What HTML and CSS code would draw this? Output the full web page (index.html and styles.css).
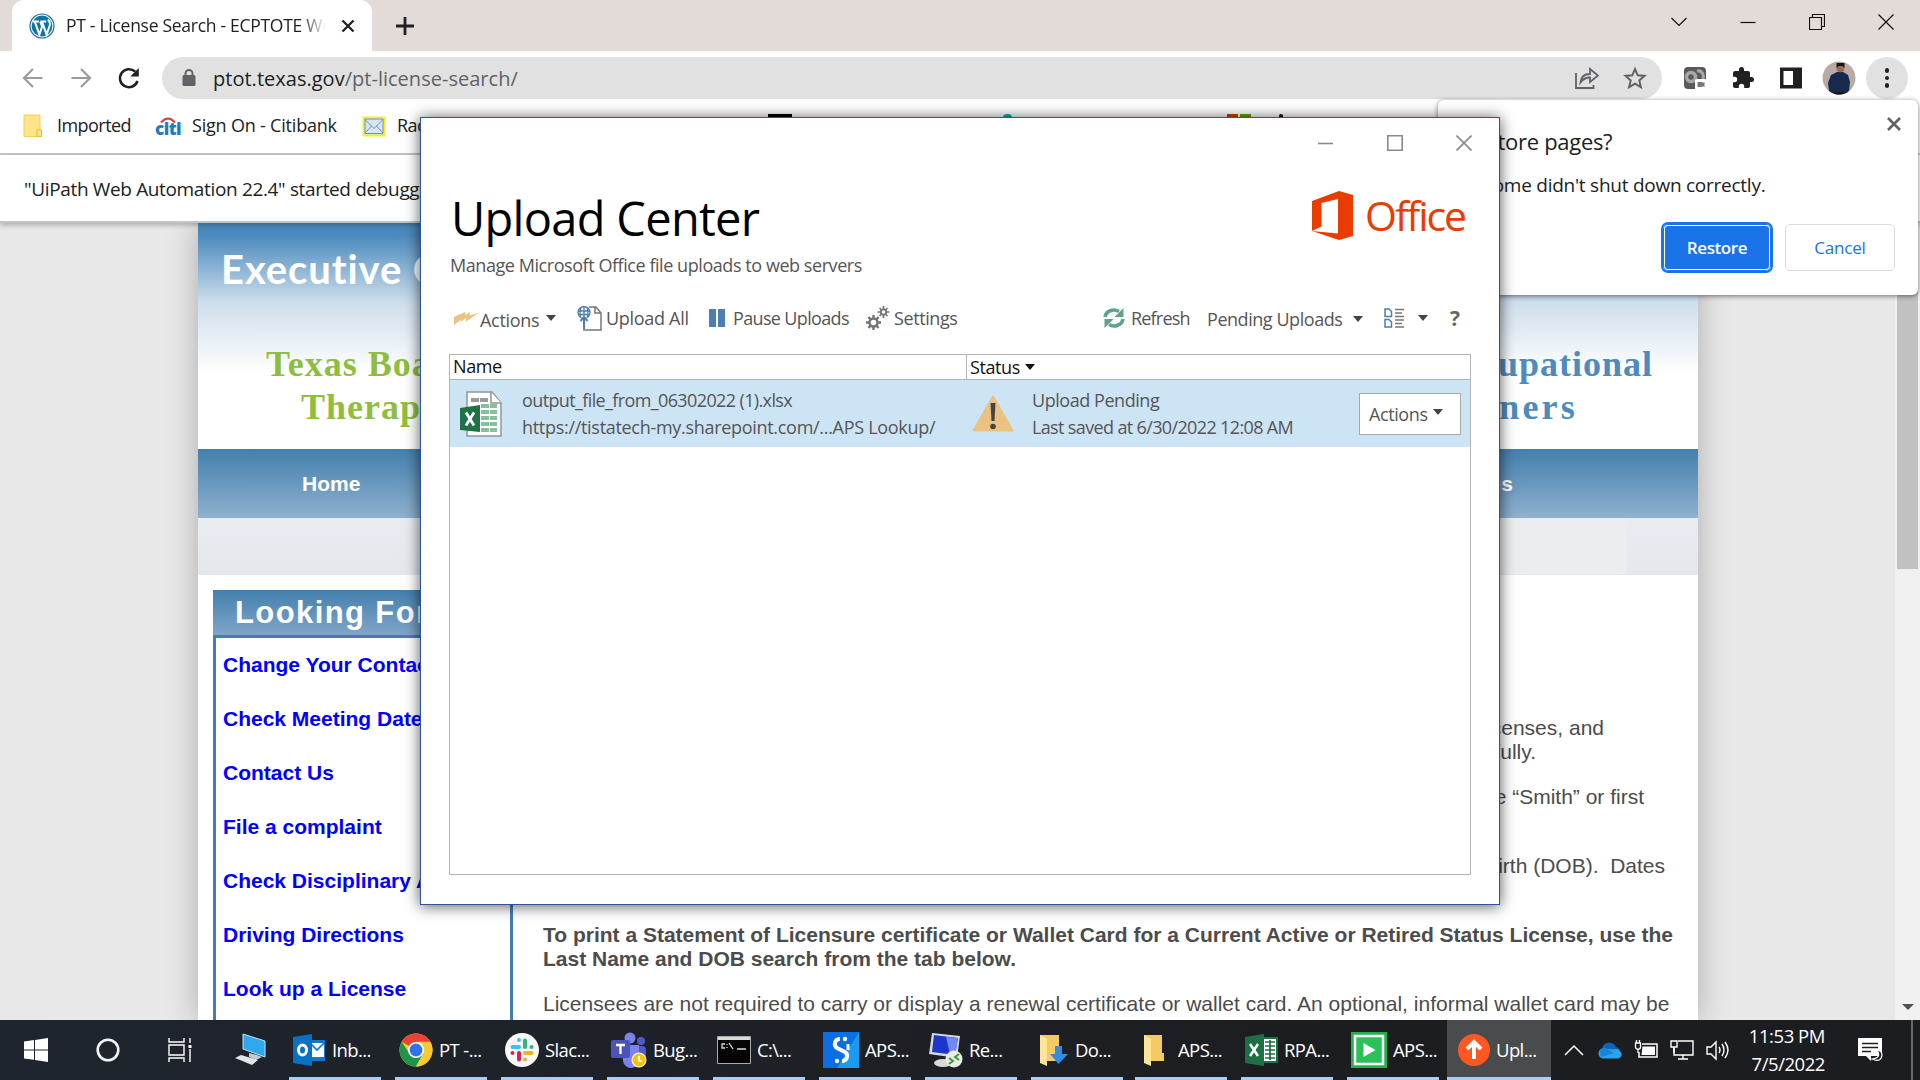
FILE: index.html
```html
<!DOCTYPE html>
<html lang="en">
<head>
<meta charset="utf-8">
<title>PT - License Search</title>
<link rel="stylesheet" href="styles.css">
</head>
<body>
<div class="desktop">
  <header class="tabstrip">
    <div class="tab">
      <svg class="wp" width="26" height="26" viewBox="0 0 26 26"><circle cx="13" cy="13" r="12" fill="#fff" stroke="#0b76a5" stroke-width="1.2"/><circle cx="13" cy="13" r="10.4" fill="#0b76a5"/><path d="M4 8.600h6M5.800 8.600l4.600 13 2.700-8-1.800-5M11.300 8.600h6M13 8.600l4.600 13 3.300-9.600c.8-3-.8-4-2-5.500" fill="none" stroke="#fff" stroke-width="2"/></svg>
      <span class="tab-title">PT - License Search - ECPTOTE W<span>eb</span></span>
      <svg width="14" height="14" viewBox="0 0 14 14"><path d="M1.500 1.500l11 11M12.500 1.500l-11 11" stroke="#202124" stroke-width="2.300"/></svg>
    </div>
    <svg class="plus" width="18" height="18" viewBox="0 0 18 18"><path d="M9 0v18M0 9h18" stroke="#202124" stroke-width="2.800"/></svg>
    <div class="win-controls">
      <svg width="16" height="16" viewBox="0 0 16 16"><path d="M.5 4l7.500 7.500L15.500 4"/></svg>
      <svg width="16" height="16" viewBox="0 0 16 16"><path d="M.5 8.500h15"/></svg>
      <svg width="16" height="16" viewBox="0 0 16 16"><path d="M.5 3.500h12v12h-12zM3.500 3.500v-3h12v12h-3"/></svg>
      <svg width="16" height="16" viewBox="0 0 16 16"><path d="M.5.5l15 15M15.500.5l-15 15"/></svg>
    </div>
  </header>

  <div class="toolbar">
    <svg class="nav" width="24" height="24" viewBox="0 0 24 24"><path d="M21.500 12H4M12 3l-9 9 9 9" fill="none" stroke="#9b9b9b" stroke-width="2.200"/></svg>
    <svg class="nav" width="24" height="24" viewBox="0 0 24 24"><path d="M2.500 12H20M12 3l9 9-9 9" fill="none" stroke="#9b9b9b" stroke-width="2.200"/></svg>
    <svg class="nav" width="24" height="24" viewBox="0 0 24 24"><path d="M20.500 15a9 9 0 1 1-2.300-9.300" fill="none" stroke="#202124" stroke-width="2.500"/><path d="M21.800 2v8.500h-8.500z" fill="#202124"/></svg>
    <div class="omnibox">
      <svg width="14" height="18" viewBox="0 0 14 18"><rect x=".5" y="6" width="13" height="11" rx="1.500" fill="#5f6368"/><path d="M3.500 7V4.500a3.500 3.500 0 0 1 7 0V7" fill="none" stroke="#5f6368" stroke-width="2"/></svg>
      <span class="url">ptot.texas.gov<span>/pt-license-search/</span></span>
      <svg class="share" width="24" height="24" viewBox="0 0 24 24"><path d="M1 7v15h17.500v-3M5.500 16.500c.5-5.500 4-8.500 9.500-8.500V3l8 6.500-8 6.500v-4.500c-4 0-7 1.500-9.500 5z" fill="none" stroke="#5f6368" stroke-width="1.800"/></svg>
      <svg width="24" height="24" viewBox="0 0 24 24"><path d="M12 3l2.700 6.300 6.800.6-5.200 4.500 1.600 6.700-5.900-3.500-5.900 3.500 1.600-6.700-5.200-4.500 6.800-.6z" fill="none" stroke="#5f6368" stroke-width="2"/></svg>
    </div>
    <svg class="ext" width="24" height="24" viewBox="0 0 24 24"><rect x="1" y="1" width="22" height="22" rx="4" fill="#5a5a5a"/><circle cx="8" cy="11" r="4.500" fill="none" stroke="#a8a8a8" stroke-width="3.500"/><path d="M14 5c6-1 7 5 6 8" fill="none" stroke="#a8a8a8" stroke-width="3"/><rect x="12" y="13" width="12" height="11" rx="2" fill="#fff"/><path d="M14.500 16h5v1l2-1v5l-2-1v1h-5z" fill="#777"/></svg>
    <svg class="ext" width="24" height="24" viewBox="0 0 24 24"><path d="M20.500 11H19V7a2 2 0 0 0-2-2h-4V3.500a2.500 2.500 0 0 0-5 0V5H4a2 2 0 0 0-2 2v3.800h1.500a2.700 2.700 0 0 1 0 5.400H2V20a2 2 0 0 0 2 2h3.800v-1.500a2.700 2.700 0 0 1 5.400 0V22H17a2 2 0 0 0 2-2v-4h1.500a2.500 2.500 0 0 0 0-5z" fill="#202124"/></svg>
    <svg class="ext" width="24" height="24" viewBox="0 0 24 24"><path d="M1 1.500h22v21H1zM4.500 5v14h9.500V5z" fill="#202124" fill-rule="evenodd"/></svg>
    <svg class="avatar" width="34" height="34" viewBox="0 0 34 34"><defs><clipPath id="av"><circle cx="17" cy="17" r="16.500"/></clipPath></defs><g clip-path="url(#av)"><path fill="#b9aaa5" d="M0 0h34v34H0z"/><path d="M15 11h6l5 3 2 7-1 9-4 4H11l-4-4-1-8 3-8z" fill="#17294d"/><circle cx="18.500" cy="7.500" r="3.800" fill="#9c6b58"/><path d="M14.500 7V2h8v5l-2-2h-4z" fill="#17130f"/><path d="M12 31h14v3H12z" fill="#171717"/></g></svg>
    <div class="menu-btn"><i></i><i></i><i></i></div>
  </div>

  <div class="bookmarks">
    <svg width="20" height="24" viewBox="0 0 20 24"><path d="M1 1h16v15h1.500v6.500H1z" fill="#ffe38a" stroke="#f3cd52"/><path d="M14 22v-6h4.500v6.500z" fill="#ffe38a" stroke="#e9bd3c"/></svg>
    <span class="bm bm-1">Imported</span>
    <span class="citi"><svg width="16" height="6" viewBox="0 0 16 6"><path d="M1 5.500q7-8 14 0" fill="none" stroke="#e03a3e" stroke-width="2"/></svg><b>citi</b></span>
    <span class="bm bm-2">Sign On - Citibank</span>
    <svg class="mail" width="24" height="24" viewBox="0 0 24 24"><path d="M1.500 3.500h21v18h-21z" fill="#d5e5f2" stroke="#f7f01b" stroke-width="2"/><path d="M3 5h18v14.500H3zM3 5.500l9 9 9-9M3 19l6.500-7M21 19l-6.500-7" fill="none" stroke="#6f94b8"/></svg>
    <span class="bm bm-3">Rackspace</span>
    <i class="fav fav-black"></i><i class="fav fav-teal"></i><i class="fav fav-ms"></i><i class="fav fav-dot"></i>
  </div>

  <div class="infobar"><span>"UiPath Web Automation 22.4" started debugging</span></div>

  <main class="viewport">
    <div class="site">
      <div class="banner">
        <div class="council">Executive Council</div>
        <div class="boards"><span class="pt pt-1">Texas Board of</span><span class="ot ot-1">Occupational</span></div>
        <div class="boards"><span class="pt pt-2">Therapy</span><span class="ot ot-2">Examiners</span></div>
      </div>
      <nav class="menu"><span>Home</span><span>Meetings</span></nav>
      <div class="subnav"><i></i></div>
      <div class="columns">
        <aside class="side">
          <h2>Looking For</h2>
          <ul>
            <li>Change Your Contact</li><li>Check Meeting Dates</li><li>Contact Us</li><li>File a complaint</li><li>Check Disciplinary Actions</li><li>Driving Directions</li><li>Look up a License</li>
          </ul>
        </aside>
        <article class="content">
          <p class="end e1">licenses, and</p>
          <p class="end e2">carefully.</p>
          <p class="end e3">like “Smith” or first</p>
          <p class="end e4">Birth (DOB).&nbsp; Dates</p>
          <p class="strong"><b>To print a Statement of Licensure certificate or Wallet Card for a Current Active or Retired Status License, use the</b><br><b>Last Name and DOB search from the tab below.</b></p>
          <p class="last">Licensees are not required to carry or display a renewal certificate or wallet card. An optional, informal wallet card may be</p>
        </article>
      </div>
    </div>
    <div class="scrollbar"><i class="thumb"></i><i class="down"></i></div>
  </main>

  <footer class="taskbar">
    <div class="sys">
      <svg width="24" height="24" viewBox="0 0 24 24"><path d="M0 3.500l10-1.400v9.300H0zM11 2l13-2v11.400H11zM0 12.400h10v9.400L0 20.500zM11 12.400h13V24l-13-2z" fill="#fff"/></svg>
      <svg width="24" height="24" viewBox="0 0 24 24"><circle cx="12" cy="12" r="10.300" fill="none" stroke="#f2f2f2" stroke-width="2.600"/></svg>
      <svg width="24" height="24" viewBox="0 0 24 24"><path d="M1 0v4h15V0M1 24v-4h15v4M1 7h15v10H1zM22 0v5M22 11v13" fill="none" stroke="#fff" stroke-width="1.400"/><path d="M20.500 7h3v3h-3z" fill="#fff"/></svg>
    </div>
    <svg class="pc" width="34" height="34" viewBox="0 0 34 34"><path d="M9 1l22 7v16L9 16z" fill="#2fa8ee" stroke="#bfe3f7"/><path d="M15 20l8 2 5 2-6 3-7-3z" fill="#c3cbd1"/><path d="M1 25l6-3 17 5-6 5z" fill="#dfe4e8"/></svg>
    <div class="task"><svg width="33" height="34" viewBox="0 0 33 34"><path d="M15 7h17v21H15z" fill="#1079ce"/><path d="M18 10h13v14H18z" fill="#fff"/><path d="M18 11l6 6 7-7" fill="none" stroke="#1079ce" stroke-width="1.700"/><path d="M0 4l19-3v32L0 30z" fill="#0572c6"/><ellipse cx="9.500" cy="17" rx="4" ry="5" fill="none" stroke="#fff" stroke-width="3"/></svg><span>Inb...</span></div>
    <div class="task"><svg width="34" height="34" viewBox="0 0 34 34"><circle cx="17" cy="17" r="16.500" fill="#fcc934"/><path d="M17 17L2.700 8.800A16.500 16.500 0 0 1 31.300 8.800z" fill="#ea4335"/><path d="M2.700 8.800A16.500 16.500 0 0 0 17 33.500l7-12.500-14-1z" fill="#1e9648"/><path d="M17 8.800h14.300a16.500 16.500 0 0 1-14.300 24.700l7.200-12.400z" fill="#fcc934"/><circle cx="17" cy="17" r="8" fill="#fff"/><circle cx="17" cy="17" r="6.400" fill="#2f73e8"/></svg><span>PT -...</span></div>
    <div class="task"><svg width="34" height="34" viewBox="0 0 34 34"><circle cx="17" cy="17" r="17" fill="#f8f8f8"/><g fill="none" stroke-width="4" stroke-linecap="round"><path d="M14 7v0M7.500 14H14" stroke="#36c5f0"/><path d="M20 7.500V14M26.500 14v0" stroke="#2eb67d"/><path d="M20 20h6.500M20 26.500v0" stroke="#ecb22e"/><path d="M14 20v6.500M7.500 20v0" stroke="#e01e5a"/></g></svg><span>Slac...</span></div>
    <div class="task"><svg width="36" height="36" viewBox="0 0 36 36"><circle cx="30" cy="9" r="4" fill="#5059c9"/><rect x="22" y="14" width="13" height="15" rx="4" fill="#5059c9"/><circle cx="19" cy="6" r="5.500" fill="#7b83eb"/><path d="M11 13h17v14a8 8 0 0 1-16 2z" fill="#7b83eb"/><rect x="0" y="8" width="19" height="18" rx="2" fill="#4b53bc"/><path d="M5 13h9M9.500 13v9" stroke="#fff" stroke-width="2.300"/><circle cx="28" cy="28" r="7.500" fill="#fff"/><circle cx="28" cy="28" r="6.500" fill="#fcc000"/><path d="M28 24v5h3" fill="none" stroke="#fff" stroke-width="1.800"/></svg><span>Bug...</span></div>
    <div class="task"><svg width="34" height="34" viewBox="0 0 34 34"><path d="M.5 3.500h33v27H.5z" fill="#050505" stroke="#aaa"/><path d="M1 4h32v3H1z" fill="#dadada"/><path d="M8 11H5v4h3M10 11v1M10 14v1M12 10l4 6M20 16h9" fill="none" stroke="#ddd" stroke-width="1.300"/></svg><span>C:\...</span></div>
    <div class="task"><svg width="36" height="36" viewBox="0 0 36 36"><path fill="#0a6fe4" d="M0 0h36v36H0z"/><path fill="#199cf0" d="M36 0v36H14z"/><path d="M17 7h-1a5 5 0 0 0-2 9l8 4a5 5 0 0 1-2 9h-1" fill="none" stroke="#fff" stroke-width="4"/><circle cx="22" cy="7" r="2.200" fill="#fff"/><circle cx="14" cy="29" r="2.200" fill="#fff"/><path d="M25 12v6" stroke="#fff" stroke-width="3"/></svg><span>APS...</span></div>
    <div class="task"><svg width="34" height="36" viewBox="0 0 34 36"><path d="M3 1l28 3-3 22L0 22z" fill="#d5d8dc"/><path d="M5 3l24 3-3 17L3 20z" fill="#1c36cc"/><path d="M17 5l12 1-3 17-5-1z" fill="#6f8bf0"/><ellipse cx="14" cy="31" rx="9" ry="4" fill="#d8d8d8"/><circle cx="25" cy="27" r="8.500" fill="#ebebe8"/><path d="M20 26l4 3-4 3M30 22l-4 3 4 3" fill="none" stroke="#34a233" stroke-width="2"/></svg><span>Re...</span></div>
    <div class="task task-folder"><svg width="30" height="34" viewBox="0 0 30 34"><path d="M1 2h19v26H1z" fill="#f3cb62"/><path d="M1 2l7 4v27l-7-3z" fill="#ffe49a"/><path d="M16 13h7v8h6L19.500 31 11 21h5z" fill="#2c8fe4"/></svg><span>Do...</span></div>
    <div class="task task-aps"><svg width="22" height="34" viewBox="0 0 22 34"><path d="M1 2h18v18h2v8H1z" fill="#f3cb62"/><path d="M1 2l7 4v27l-7-3z" fill="#ffe49a"/></svg><span>APS...</span></div>
    <div class="task"><svg width="33" height="34" viewBox="0 0 33 34"><path d="M17 5h15v24H17z" fill="#fff" stroke="#1d7044" stroke-width="2"/><path d="M20 9h10M20 13h10M20 17h10M20 21h10M20 25h10M25 7v20" stroke="#1d7044" stroke-width="1.700"/><path d="M0 4l19-3v32L0 30z" fill="#1d7044"/><path d="M5 11l8 12M13 11L5 23" stroke="#fff" stroke-width="2.500"/></svg><span>RPA...</span></div>
    <div class="task"><svg width="36" height="36" viewBox="0 0 36 36"><path fill="#23b14e" d="M0 0h36v36H0z"/><path d="M4 4h28v28H4z" fill="#2bc05a" stroke="#fff" stroke-width="2.500"/><path d="M12.500 11l12 7-12 7z" fill="#fff"/></svg><span>APS...</span></div>
    <div class="task active"><svg width="32" height="32" viewBox="0 0 32 32"><circle cx="16" cy="16" r="16" fill="#ff5722"/><path d="M16 25V8M9 15l7-7 7 7" fill="none" stroke="#fff" stroke-width="4"/></svg><span>Upl...</span></div>
    <div class="tray">
      <svg width="20" height="24" viewBox="0 0 20 24"><path d="M1 17l9-9 9 9" fill="none" stroke="#fff" stroke-width="1.500"/></svg>
      <svg width="24" height="24" viewBox="0 0 24 24"><path d="M5 20a5 5 0 0 1-1-9.500A7.500 7.500 0 0 1 18 9a6 6 0 0 1 1 11z" fill="#0d64b8"/><path d="M5 20.500a5 5 0 0 1 1-10l9 1a6 6 0 0 1 8 3 4 4 0 0 1-3 6z" fill="#29a4ea"/><path d="M2 12a6 6 0 0 1 6-2l8 5L3 19z" fill="#1684d8"/></svg>
      <svg width="24" height="24" viewBox="0 0 24 24"><path d="M8 6h15v13H5v-5" fill="none" stroke="#fff" stroke-width="1.500"/><path d="M8.500 8.500h12.500v8.500H7.500z" fill="#fff"/><path d="M1.500 5h5v4c0 3-5 3-5 0zM2.500 2v3M5.500 2v3M4 11v4" fill="none" stroke="#fff" stroke-width="1.300"/></svg>
      <svg width="24" height="24" viewBox="0 0 24 24"><path d="M8 3h15v14H4v-7M13 17v4M8 21h10" fill="none" stroke="#fff" stroke-width="1.400"/><path d="M1 3h6v6H1zM4 9v6" fill="none" stroke="#fff" stroke-width="1.400"/></svg>
      <svg width="24" height="24" viewBox="0 0 24 24"><path d="M1 9h4l5-5v17l-5-5H1zM13 9q2 3 0 6M16 6q4 6 0 12M19 4q6 8 0 16" fill="none" stroke="#fff" stroke-width="1.400"/></svg>
    </div>
    <div class="clock"><span>11:53 PM</span><span>7/5/2022</span></div>
    <svg class="notice" width="26" height="26" viewBox="0 0 26 26"><path d="M1 1h24v18H14v5l-5-5H1z" fill="#fff"/><path d="M5 6.500h16M5 10.500h16M5 14.500h9" stroke="#1d1e21" stroke-width="1.500"/><path d="M20 13q5 8-5 9 9 4 10-4 0-4-5-5z" fill="#1d1e21" stroke="#fff" stroke-width="1.200"/></svg>
    <i class="peek"></i>
  </footer>

  <section class="restore">
    <svg class="restore-x" width="14" height="14" viewBox="0 0 14 14"><path d="M1 1l12 12M13 1L1 13" stroke="#5f6368" stroke-width="2.600"/></svg>
    <h3>Restore pages?</h3>
    <p>Chrome didn't shut down correctly.</p>
    <div class="restore-btns"><span class="primary">Restore</span><span class="secondary">Cancel</span></div>
  </section>

  <section class="window">
    <div class="window-controls">
      <svg width="16" height="16" viewBox="0 0 16 16"><path d="M0 8.500h15"/></svg>
      <svg width="16" height="16" viewBox="0 0 16 16"><path d="M.8.800h14.400v14.400H.8z"/></svg>
      <svg width="16" height="16" viewBox="0 0 16 16"><path d="M.5.5l15 15M15.500.5l-15 15"/></svg>
    </div>
    <div class="window-head">
      <div><h1>Upload Center</h1><p>Manage Microsoft Office file uploads to web servers</p></div>
      <div class="office"><svg width="41" height="49" viewBox="0 0 41 49"><path d="M0 10L27 0l14 4v41l-14 4L0 40l26 2.500V8L9.500 12v23.500L0 40z" fill="#eb3c00"/></svg><span>Office</span></div>
    </div>
    <div class="commands">
      <div class="cmd c-actions"><svg width="25" height="14" viewBox="0 0 25 14"><path d="M0 6L11 1l.5 3L16 1l-.5 3.500L25 1.500 11.500 11l1-4.500L6.500 11V9L0 14z" fill="#eac282"/></svg><span>Actions</span><i class="caret"></i></div>
      <div class="cmd c-upload"><svg width="25" height="25" viewBox="0 0 25 25"><path d="M12 1h7l5 6v17H6M18 1v6h6" fill="none" stroke="#777" stroke-width="1.500"/><g fill="none" stroke="#4a7eb5" stroke-width="1.300"><circle cx="7" cy="6.500" r="6"/><path d="M1 5h12M1 8.500h12M7 0v13M4 1.500q-2 5 0 10M10 1.500q2 5 0 10"/></g><path d="M7 10v12" stroke="#fff" stroke-width="5"/><path d="M7 23V11M3.500 15L7 11l3.500 4" fill="none" stroke="#4a7eb5" stroke-width="2"/></svg><span>Upload All</span></div>
      <div class="cmd c-pause"><svg width="16" height="18" viewBox="0 0 16 18"><path d="M0 0h7v18H0zM9 0h7v18H9z" fill="#4a7eb5"/></svg><span>Pause Uploads</span></div>
      <div class="cmd c-settings"><svg width="25" height="25" viewBox="0 0 25 25"><g fill="none" stroke="#747474"><circle cx="8.500" cy="16.500" r="4" stroke-width="2.500"/><path d="M8.500 9v4M8.500 20v4M1 16.500h4M12 16.500h4M3.500 11l2.500 3M13.500 11L11 14M3.500 22L6 19M13.500 22L11 19" stroke-width="2.400"/><circle cx="18.500" cy="6" r="2.700" stroke-width="1.800"/><path d="M18.500 0v3M18.500 9v3M12.500 6h3M21.500 6h3M14.500 2l2 2M22.500 2l-2 2M14.500 10l2-2M22.500 10l-2-2" stroke-width="1.700"/></g></svg><span>Settings</span></div>
      <div class="cmd c-refresh"><svg width="22" height="22" viewBox="0 0 22 22"><path d="M2 10a9 8 0 0 1 14-5.500M20 12A9 8 0 0 1 6 17.500" fill="none" stroke="#5fa387" stroke-width="3.600"/><path d="M20.500 1v9h-9zM1.500 21v-9h9z" fill="#5fa387"/></svg><span>Refresh</span></div>
      <div class="cmd c-pending"><span>Pending Uploads</span><i class="caret"></i></div>
      <div class="cmd c-view"><svg width="20" height="20" viewBox="0 0 20 20"><path d="M1 1h4l2.500 2.500V8.500H1zM1 11.500h4L7.500 14v5H1z" fill="none" stroke="#4a7eb5" stroke-width="1.500"/><path d="M11 1.500h9M11 5h7M11 8.500h9M11 12h9M11 15.500h7M11 19h9" stroke="#777" stroke-width="1.300"/></svg><i class="caret"></i></div>
      <b class="help">?</b>
    </div>
    <div class="list">
      <div class="list-head"><span class="col-name">Name</span><span class="col-status">Status<i class="caret"></i></span></div>
      <div class="list-row">
        <svg class="xls" width="42" height="46" viewBox="0 0 42 46"><path d="M7 1h25l9 11v33H7z" fill="#fff" stroke="#8d969c" stroke-width="1.500"/><path d="M31 1v11h10" fill="#fff" stroke="#8d969c" stroke-width="1.500"/><path d="M11 7h8v4h-8zM20 7h8v4h-8z" fill="#9a9a9a"/><path d="M21 13h8v4h-8zM30 13h7v4h-7zM21 19h8v4h-8zM30 19h7v4h-7zM21 25h8v4h-8zM30 25h7v4h-7zM21 31h8v4h-8zM30 31h7v4h-7zM21 37h8v4h-8zM30 37h7v4h-7z" fill="#87bf9f"/><path d="M0 17l20-3v27L0 39z" fill="#1f7246"/><path d="M6 21.500l8 13M14 21.500l-8 13" stroke="#fff" stroke-width="2.800"/></svg>
        <div class="file"><span class="f1">output_file_from_06302022 (1).xlsx</span><span class="f2">https://tistatech-my.sharepoint.com/...APS Lookup/</span></div>
        <svg class="warn" width="42" height="37" viewBox="0 0 42 37"><path d="M21 1.500L40.500 35.500h-39z" fill="#eac282" stroke="#eac282" stroke-width="2" stroke-linejoin="round"/><path d="M18.500 8h5l-1 18h-3z" fill="#444"/><circle cx="21" cy="31.500" r="2.800" fill="#444"/></svg>
        <div class="state"><span class="s1">Upload Pending</span><span class="s2">Last saved at 6/30/2022 12:08 AM</span></div>
        <div class="row-btn"><span>Actions</span><i class="caret"></i></div>
      </div>
    </div>
  </section>
</div>
</body>
</html>
```
FILE: styles.css
```css
* { box-sizing: border-box; }
body { margin: 0; overflow: hidden; font-family: "Open Sans", "Noto Sans", sans-serif; color: #202124; }
h1, h2, h3, p, ul { margin: 0; padding: 0; font-weight: normal; list-style: none; }
svg { display: block; flex: none; }
span { white-space: nowrap; }
.desktop { position: relative; width: 1920px; height: 1080px; display: flex; flex-direction: column; overflow: hidden; background: #fff; }

/* browser chrome */
.tabstrip { height: 51px; flex: none; display: flex; align-items: center; background: #e3dbd8; padding-left: 12px; }
.tab { width: 360px; height: 51px; display: flex; align-items: center; background: #fff; border-radius: 12px 12px 0 0; padding: 0 16px 0 17px; }
.tab-title { width: 262px; margin: 0 13px 2px 11px; overflow: hidden; font-size: 17.500px; letter-spacing: -.28px; -webkit-mask-image: linear-gradient(90deg, #000 90%, transparent 99%); mask-image: linear-gradient(90deg, #000 90%, transparent 99%); }
.plus { margin-left: 24px; }
.win-controls { margin-left: auto; margin-right: 26px; display: flex; gap: 53px; fill: none; stroke: #111; stroke-width: 1.200; padding-bottom: 8px; }
.toolbar { height: 54px; flex: none; display: flex; align-items: center; padding: 0 12px 0 21px; }
.nav { margin-right: 24px; }
.omnibox { width: 1500px; height: 42px; margin-left: -3px; border-radius: 21px; background: #e1e1e1; display: flex; align-items: center; padding: 0 15px 0 20px; }
.url { margin-left: 17px; font-size: 20px; letter-spacing: .02px; }
.url span { color: #5f6368; }
.share { margin-left: auto; margin-right: 24px; }
.ext { margin-left: 24px; }
.omnibox + .ext { margin-left: 21px; }
.avatar { margin: 0 10px 0 19px; }
.menu-btn { width: 42px; height: 42px; border-radius: 50%; background: #e1e1e1; display: flex; flex-direction: column; gap: 3px; align-items: center; justify-content: center; }
.menu-btn i { width: 4.500px; height: 4.500px; border-radius: 50%; background: #202124; }
.bookmarks { height: 50px; flex: none; display: flex; align-items: center; padding: 0 0 7px 23px; border-bottom: 2px solid #c8c8c8; }
.bm { font-size: 18px; letter-spacing: -.55px; padding-bottom: 1px; }
.bm-1 { width: 83px; margin-left: 14px; }
.citi { width: 26px; margin-left: 15px; display: flex; flex-direction: column; align-items: center; color: #1c7cc0; font: bold 17px/12px "Open Sans", sans-serif; letter-spacing: -.5px; }
.bm-2 { width: 157px; margin-left: 11px; letter-spacing: -.2px; }
.mail { margin-left: 13px; }
.bm-3 { width: 90px; margin-left: 11px; }
.fav { width: 24px; height: 24px; flex: none; }
.fav-black { margin-left: 281px; background: #000; }
.fav-teal { width: 9px; margin-left: 211px; background: #17a7c4; border-radius: 4px; }
.fav-ms { margin-left: 215px; background: linear-gradient(90deg, #d83b01 11px, #fff 11px 13px, #6ba300 13px); }
.fav-dot { width: 4px; margin-left: 28px; background: #111; border-radius: 2px; }
.infobar { height: 68px; flex: none; display: flex; align-items: center; padding: 2px 0 0 24px; border-bottom: 2px solid #c4c4c4; font-size: 19px; letter-spacing: -.35px; position: relative; box-shadow: 0 2px 5px #0004; }

/* site */
.viewport { height: 797px; flex: none; display: flex; overflow: hidden; background: #e8e8e8; }
.site { width: 1500px; margin-left: 198px; background: #fff; box-shadow: 0 0 30px #0004; }
.banner { height: 226px; padding-top: 21px; background: linear-gradient(#4b89bd 0, #4b89bd 12px, #cfdfed 80px, #fff 150px); font-family: "Liberation Serif", serif; font-weight: bold; }
.council { height: 50px; padding-left: 23px; color: #fff; font: bold 40px/50px Lato, sans-serif; letter-spacing: .9px; }
.boards { height: 43px; display: flex; font-size: 36px; line-height: 43px; letter-spacing: 1px; }
.council + .boards { margin-top: 49px; }
.pt { color: #8fbe3f; }
.ot { color: #4b8bbf; margin-left: auto; }
.pt-1 { padding-left: 68px; }
.pt-2 { padding-left: 103px; }
.ot-1 { padding-right: 45px; }
.ot-2 { padding-right: 120px; letter-spacing: 3.200px; }
.menu { height: 69px; display: flex; justify-content: space-between; padding: 0 185px 0 104px; align-items: center; color: #fff; font: bold 21px "Liberation Sans", sans-serif; background: linear-gradient(#437fae, #8fb1ce); }
.subnav { height: 57px; display: flex; background: linear-gradient(#e9ecf1, #e4e8ed); }
.subnav i { width: 1429px; height: 56px; border-radius: 0 0 5px 0; background: linear-gradient(90deg, transparent 60%, #ecedef 80%); }
.columns { display: flex; padding: 15px 0 0 15px; font-family: "Liberation Sans", sans-serif; }
.side { width: 300px; flex: none; }
.side h2 { height: 45px; padding-left: 22px; color: #fff; font: bold 31px/45px "Liberation Sans", sans-serif; letter-spacing: 1.400px; background: linear-gradient(#437fae, #7fa6c8); }
.side ul { height: 420px; border: 3px solid #437fae; padding: 0 7px; }
.side li { height: 54px; line-height: 54px; color: #00f; font-weight: bold; font-size: 21px; white-space: nowrap; }
.content { padding-left: 30px; width: 1185px; color: #4c4c4c; font-size: 21px; line-height: 24px; white-space: nowrap; }
.end { text-align: right; }
.e1 { margin-top: 126px; padding-right: 94px; }
.e2 { padding-right: 162px; }
.e3 { margin-top: 21px; padding-right: 54px; }
.e4 { margin-top: 45px; padding-right: 33px; }
.strong { margin-top: 45px; }
.last { margin-top: 21px; }
.scrollbar { width: 25px; margin-left: auto; background: #f0f0f0; padding: 0 2px 10px; display: flex; flex-direction: column; justify-content: space-between; align-items: center; }
.thumb { width: 21px; height: 346px; background: #c1c1c1; }
.down { border: 6px solid transparent; border-top-color: #505050; border-bottom: 0; }

/* taskbar */
.taskbar { height: 60px; flex: none; display: flex; align-items: center; background: linear-gradient(90deg, #1f252e, #1c1d20 70%); color: #fff; font-size: 18.500px; letter-spacing: -.6px; }
.sys { display: flex; gap: 48px; padding-left: 24px; }
.pc { margin-left: 42px; margin-right: 21px; }
.task { width: 92px; height: 60px; margin-right: 14px; padding-left: 4px; display: flex; align-items: center; gap: 6px; border-bottom: 3px solid #a9cdf8; flex: none; padding-top: 2px; }
.task-folder { margin-right: 12px; padding-left: 8px; }
.task-aps { padding-left: 8px; gap: 13px; }
.task:nth-last-child(6) { margin-right: 8px; }
.task.active { width: 104px; padding-left: 11px; margin-right: 13px; background: #4a4b4d; }
.tray { display: flex; gap: 12px; }
.tray svg:first-child { margin-right: 2px; }
.clock { width: 76px; margin-left: 19px; display: flex; flex-direction: column; line-height: 28px; align-items: flex-end; letter-spacing: -.45px; }
.notice { margin-left: 32px; }
.peek { width: 2px; height: 60px; margin-left: auto; margin-right: 7px; background: #66686a; }

/* restore bubble */
.restore { position: absolute; left: 1438px; top: 100px; width: 480px; height: 195px; padding: 24px 23px 0 24px; background: #fff; border-radius: 6px; box-shadow: 0 1px 5px #0008; }
.restore-x { position: absolute; right: 17px; top: 17px; }
.restore h3 { font-size: 22px; line-height: 34px; letter-spacing: -.3px; }
.restore p { margin-top: 12px; font-size: 19px; line-height: 30px; letter-spacing: -.25px; white-space: nowrap; }
.restore-btns { display: flex; justify-content: flex-end; gap: 14px; margin-top: 24px; font-size: 17px; font-weight: 600; letter-spacing: -.4px; color: #1a73e8; }
.restore-btns span { width: 110px; height: 47px; border-radius: 5px; display: flex; align-items: center; justify-content: center; padding-bottom: 1px; }
.restore-btns .primary { width: 108px; color: #fff; background: #1a73e8; box-shadow: inset 0 0 0 1px #1a73e8, inset 0 0 0 2px #fff, 0 0 0 2px #1a73e8; }
.restore-btns .secondary { border: 1px solid #dadce0; font-weight: 500; letter-spacing: -.2px; }

/* upload center window */
.window { position: absolute; z-index: 2; left: 420px; top: 117px; width: 1080px; height: 788px; background: #fff; border: 1.500px solid #2b579a; box-shadow: 0 1px 14px #000a; color: #555; font-size: 18px; }
.window-controls { display: flex; justify-content: flex-end; gap: 53px; padding: 17px 27px 0 0; fill: none; stroke: #8a8a8a; stroke-width: 1.600; }
.window-head { display: flex; justify-content: space-between; padding: 32px 34px 0 29px; height: 146px; }
.window h1 { font-size: 47px; line-height: 70px; color: #000; letter-spacing: -.7px; padding-left: 1px; }
.window-head p { font-size: 18px; line-height: 26px; letter-spacing: -.44px; margin-top: -1px; }
.office { display: flex; gap: 12px; padding-top: 8px; color: #eb3c00; font-size: 41px; line-height: 48px; letter-spacing: -2.100px; }
.commands { display: flex; height: 42px; align-items: center; padding-left: 33px; }
.cmd { display: flex; align-items: center; height: 30px; letter-spacing: -.3px; }
.caret { border: 5.500px solid transparent; border-top: 6px solid #444; border-bottom: 0; flex: none; }
.c-actions { width: 123px; }
.c-actions span { width: 66px; padding-top: 3px; margin-left: 1px; }
.c-upload { width: 132px; gap: 4px; }
.c-pause { width: 156px; gap: 8px; letter-spacing: -.65px; }
.c-settings { width: 238px; gap: 4px; letter-spacing: -.4px; }
.c-refresh { width: 104px; gap: 6px; letter-spacing: -.8px; }
.c-pending { width: 177px; gap: 9px; padding-top: 2px; letter-spacing: -.45px; }
.c-pending span { width: 137px; }
.c-view { width: 66px; gap: 14px; }
.help { font-size: 21px; color: #666; }
.list { width: 1022px; height: 521px; margin: 15px 0 0 28px; border: 1.500px solid #b4b4b4; }
.list-head { height: 25px; display: flex; border-bottom: 1.500px solid #b4b4b4; color: #111; line-height: 23px; letter-spacing: -.4px; }
.col-name { width: 517px; padding-left: 3px; border-right: 1px solid #b4b4b4; }
.col-status { padding-left: 3px; display: flex; align-items: center; gap: 5px; }
.col-status .caret { border-top-color: #111; }
.list-row { height: 67px; display: flex; align-items: center; background: #cde4f5; padding: 0 9px 0 10px; }
.file { width: 470px; padding-left: 20px; }
.file span, .state span { display: block; line-height: 27px; letter-spacing: -.3px; }
.file .f1 { letter-spacing: -.62px; }
.state { padding-left: 18px; }
.state .s1 { letter-spacing: -.45px; }
.state .s2 { letter-spacing: -.64px; }
.row-btn { margin-left: auto; width: 102px; height: 42px; background: #fff; border: 1.500px solid #a9a9a9; display: flex; align-items: center; gap: 5px; padding-left: 9px; letter-spacing: -.4px; }
.row-btn .caret { margin-bottom: 4px; }
```
